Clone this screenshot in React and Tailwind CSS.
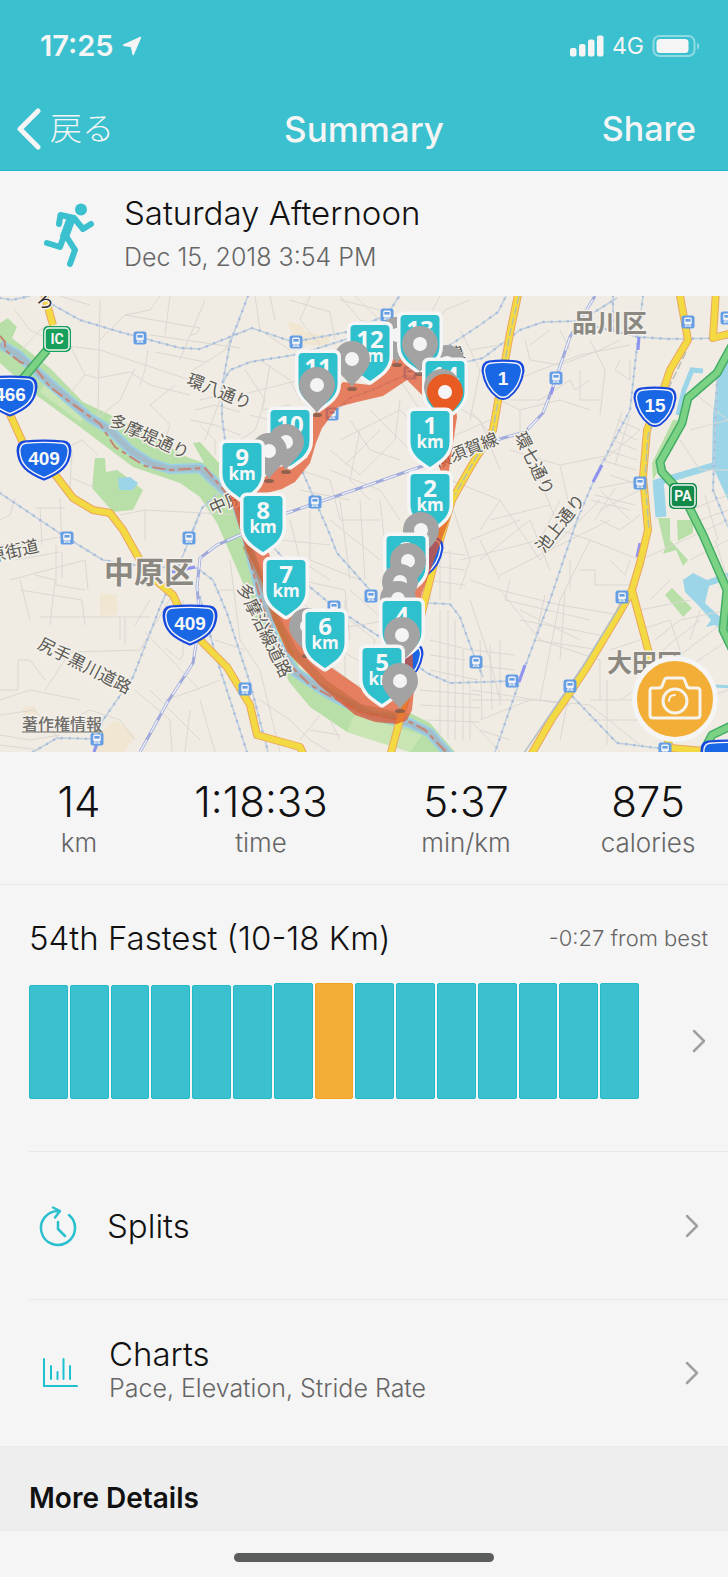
import React from "react";

const KM_MARKERS_AND_PINS = [
  { type: "pin", x: 397, y: 335 },
  { type: "km", x: 370, y: 325, n: "12" },
  { type: "pin", x: 352, y: 359 },
  { type: "km", x: 318, y: 353, n: "11" },
  { type: "pin", x: 317, y: 385 },
  { type: "km", x: 290, y: 410, n: "10" },
  { type: "pin", x: 286, y: 442 },
  { type: "pin", x: 269, y: 451 },
  { type: "km", x: 242, y: 443, n: "9" },
  { type: "km", x: 263, y: 496, n: "8" },
  { type: "km", x: 286, y: 560, n: "7" },
  { type: "pin", x: 307, y: 626 },
  { type: "km", x: 325, y: 612, n: "6" },
  { type: "pin", x: 447, y: 363 },
  { type: "km", x: 420, y: 315, n: "13" },
  { type: "pin", x: 420, y: 344 },
  { type: "km", x: 445, y: 361, n: "14" },
  { type: "pin", x: 442, y: 387 },
  { type: "pin", x: 445, y: 392, color: "#e85b22" },
  { type: "km", x: 430, y: 411, n: "1" },
  { type: "km", x: 430, y: 474, n: "2" },
  { type: "pin", x: 421, y: 530 },
  { type: "km", x: 406, y: 536, n: "3" },
  { type: "pin", x: 408, y: 561 },
  { type: "pin", x: 400, y: 582 },
  { type: "pin", x: 398, y: 599 },
  { type: "km", x: 402, y: 601, n: "4" },
  { type: "pin", x: 402, y: 635 },
  { type: "km", x: 382, y: 648, n: "5" },
  { type: "pin", x: 400, y: 681 },
];

const STATIONS = [
  [140, 338], [296, 342], [387, 315], [410, 373], [332, 414], [315, 502],
  [67, 538], [189, 538], [245, 689], [97, 739], [371, 596], [334, 607],
  [476, 662], [688, 322], [556, 378], [640, 483], [727, 318], [622, 597],
  [512, 681], [570, 686], [665, 749],
];

const RAILS = [
  "M0 298L12 300L30 296M53 305L80 320L120 332L180 348L200 349L252 328L293 342L347 332L387 315L400 295",
  "M248 296L230 343L222 387L222 417L225 440",
  "M223 382L230 370L250 362L300 354L350 338L387 328",
  "M332 414L350 398L372 390L410 373L470 361L483 358L520 330L543 322L580 321L617 298",
  "M450 345L480 325L498 312L506 296",
  "M0 493L55 530M40 520L67 538L103 560L147 567L197 568L213 580L227 613L250 683L268 752",
  "M197 520L180 563L160 607L133 677L103 720L97 739L94 752",
  "M33 752L57 738L97 739",
  "M200 597L217 660L247 752",
  "M597 327L638 337L670 339L728 338M643 296L638 337L630 410L597 473L577 520L550 600L520 680L495 752",
  "M613 296L613 330",
  "M303 473L328 530L337 553L370 590M273 547L310 587L334 607L380 637L427 673L450 683L483 682L512 681",
  "M427 603L450 604L460 617L473 653L483 677",
  "M573 697L617 743L665 749",
  "M717 377L713 490L728 527",
  "M193 530L202 508L220 492",
];

const JR_LINES = [
  "M240 535L217 545L200 558L197 587L200 620L193 663L167 703L140 752",
  "M240 535L287 513L360 488L417 468L503 438L525 432L543 413L553 387L570 337L595 296",
];

const YELLOW_ROADS = [
  "M43 290L53 325",
  "M8 410L23 443L57 477L73 498L93 510L110 513L123 530L147 573L173 595L180 610L203 643L227 667L250 705L257 735L300 747L306 760",
  "M519 290L510 333L493 430L470 468L452 500L440 540L420 620L408 690L398 727L389 760",
  "M679 290L688 340L670 370L660 400L647 430L643 477L648 530L640 563L632 590L617 617L587 667L567 697L553 717L528 760",
  "M632 590L650 657L665 730L670 748L728 753",
  "M716 290L713 338L732 333",
];

const GREEN_ROADS = [
  "M735 340L717 373L688 398L682 423L660 462L662 472L683 495L703 535L727 590L723 630L735 655",
  "M47 350L20 382",
  "M735 724L712 735L704 750",
];

const MINOR_STREETS = [
  "M15 310L30 330L60 345L100 350L190 380M100 300L98 420M100 340L125 315L150 310L160 296M60 296L90 305M20 352L40 330L48 325M70 345L85 375L98 378L130 372",
  "M125 315L200 328L196 334L190 335M148 350L145 370L140 385M155 352L205 362M150 335L240 348M170 296L165 335M205 300L180 360",
  "M98 418L120 400L135 368M60 405L85 375M130 372L150 385L190 395M150 405L170 425L165 440M150 405L175 385",
  "M200 400L222 395L240 400M195 410L215 405L240 412M205 440L220 400L235 390M190 420L215 425L240 435M200 425L215 440L215 455M240 320L225 350L190 372",
  "M40 462L82 440L98 455M72 452L70 490M72 478L95 488M40 508L42 545M60 498L62 545M35 508L65 508M120 515L145 510L240 515M145 510L145 540M0 520L10 515L15 498",
  "M0 545L20 545L60 537M15 560L60 552M10 580L85 560L88 590M20 590L82 600L85 625M20 580L30 620M35 575L55 580L50 625M56 545L56 585L85 590M62 552L62 578",
  "M40 617L150 617M120 617L120 640M125 618L125 645M135 625L150 600M70 652L140 650L175 590M70 652L45 690M145 632L200 690M165 648L180 660L183 655L183 600",
  "M0 690L18 690L18 660L30 660L45 680M0 700L30 690L80 700M0 715L35 710L60 740M60 725L90 710L120 720L135 740M135 690L170 720L172 752M150 690L200 740M200 700L215 752",
  "M0 735L30 740L60 735M0 745L40 750M165 700L195 690L220 680M190 710L185 752M215 590L240 590M230 560L240 640L260 670L280 752M215 640L245 650",
  "M255 296L260 330L290 350M270 296L275 320M290 300L330 312L335 340M310 296L300 320L320 345M340 296L360 320L400 330M355 296L390 330L390 340M340 300L380 310M440 296L430 315M430 340L445 310L470 300",
  "M260 360L290 380L300 400M245 370L265 400L255 430L240 440M270 365L262 410L290 405M240 395L280 385L300 380M250 415L270 420M340 350L350 390",
  "M340 440L360 430L400 410L430 440M350 420L370 450L400 460M330 450L360 475L395 440L400 400M360 430L350 480L370 500M370 410L410 450M330 470L380 490L400 520M380 430L345 465M400 380L420 410",
  "M300 470L330 480L340 520L380 520M300 490L350 500M310 510L310 560L360 580M330 520L380 560M340 500L350 580M290 520L300 560L330 580M360 500L365 580M280 540L330 545",
  "M300 580L345 590L350 640M300 600L330 630L390 620M345 600L345 680M350 590L395 630M350 620L375 640L360 690M340 650L375 670M330 665L355 685L385 690",
  "M445 400L480 420L500 470M460 330L480 370L470 420M470 410L495 440L470 470M470 350L500 345M445 440L490 420M450 480L500 500L480 530M470 540L520 520M460 560L540 540L560 500M450 500L470 560L460 590",
  "M525 340L530 360L560 365L600 350L620 340M515 380L540 370L580 355L630 345M510 400L540 400L570 380L575 390L590 380M580 370L580 400L600 400M570 350L560 330M590 340L605 370L600 415M620 360L615 370L630 380L630 360M530 345L550 330",
  "M500 400L520 410L520 450M510 450L560 465L610 455L640 430M520 410L560 400L590 410M560 465L570 510M540 480L560 530M500 500L540 560L600 500M490 520L550 505M480 560L530 520L550 570",
  "M618 420L640 430M615 430L637 440M612 440L637 450M606 450L637 460M600 460L636 470M630 415L615 465M622 412L605 462M610 475L640 485M598 488L640 480M595 495L635 505M590 500L630 510M600 490L630 520M600 510L640 490M595 520L615 488",
  "M470 580L500 590L560 605L620 615M500 590L540 640L600 660M470 600L490 660L500 700M480 540L500 580M545 595L535 640L600 650M565 590L560 660M510 580L505 600L590 620M520 610L580 640M520 620L600 635M590 540L560 600L540 700",
  "M500 575L610 520M590 540L640 560L728 520M600 520L620 530L640 515M610 560L625 575L630 560M580 570L595 570L595 585L630 585M560 530L590 540M570 560L570 590",
  "M480 640L482 720M490 645L492 710M500 640L500 705M472 650L515 655M472 665L515 670M472 690L570 705M472 700L540 700L590 705L640 745M480 720L530 700M480 730L510 740M570 690L560 740M600 660L600 700M607 680L607 745M590 700L640 700M590 720L640 720",
  "M650 600L670 580M640 610L690 600M655 640L680 620L728 610M650 660L700 620M660 670L720 625M670 680L728 640M640 630L670 620L690 680M700 610L690 640M610 650L640 640M620 700L635 690M700 700L728 690M690 560L728 540M715 540L728 580",
  "M440 610L440 740M448 610L448 740M455 620L455 740M463 650L463 740M470 680L470 740M430 640L470 650M430 655L465 660M430 670L478 680M420 690L480 695M420 705L480 708M425 720L480 722M470 720L500 752",
  "M430 540L430 600M440 545L440 600M450 550L450 600M425 550L465 555M425 565L465 570M425 580L465 585M395 540L400 600M385 545L385 590M380 500L385 545",
  "M290 720L310 740L330 752M320 715L300 740M310 730L340 735M340 740L330 720M260 700L290 720M690 430L728 420M680 440L700 470L728 470M690 390L728 420M690 510L728 495M700 520L728 510M705 495L718 540",
];

const STREET_LABELS = [
  { t: "環八通り", x: 217, y: 397, a: 22 },
  { t: "多摩堤通り", x: 147, y: 442, a: 24 },
  { t: "中原", x: 228, y: 508, a: -24 },
  { t: "原街道", x: 15, y: 557, a: -13 },
  { t: "尻手黒川道路", x: 82, y: 671, a: 27 },
  { t: "多摩沿線道路", x: 259, y: 633, a: 64 },
  { t: "横須賀線", x: 468, y: 456, a: -22 },
  { t: "環七通り", x: 529, y: 466, a: 64 },
  { t: "池上通り", x: 565, y: 527, a: -52 },
  { t: "線", x: 458, y: 360, a: -20 },
];

function KmMarker({ x, y, n }) {
  const d = "M-19.500 4q0-4 4-4h31q4 0 4 4v27c0 12-9 18-19.500 25c-10.500-7-19.500-13-19.500-25z";
  return (
    <g transform={`translate(${x} ${y})`}>
      <path d={d} fill="#f5f5f5" stroke="#f5f5f5" strokeWidth="7" strokeLinejoin="round" />
      <path d={d} fill="#2fc0ce" />
      <g fill="#f7f7f7" textAnchor="middle" className="font-['Open_Sans',sans-serif] font-bold">
        <text y="23" fontSize="24">{n}</text>
        <text y="37" fontSize="17">km</text>
      </g>
    </g>
  );
}

function Pin({ x, y, color = "#a3a3a3" }) {
  return (
    <g transform={`translate(${x} ${y})`}>
      <ellipse cy="30" rx="5" ry="2" fill="#7c5a4c" opacity="0.8" />
      <path d="M0 28C-5 20-18 12-18 0A18 18 0 0 1 18 0C18 12 5 20 0 28Z" fill={color} />
      <circle r="7" fill="#f4f4f4" />
    </g>
  );
}

function RouteShield({ x, y, n, wide }) {
  const d = wide
    ? "M-20-18Q0-20 20-18Q26-17 26-9C25 5 17 12 0 19C-17 12-25 5-26-9Q-26-17-20-18Z"
    : "M-14-18Q0-20 14-18Q20-17 20-9C18 4 12 12 5 17Q0 20-5 17C-12 12-18 4-20-9Q-20-17-14-18Z";
  return (
    <g transform={`translate(${x} ${y})`}>
      <path d={d} fill="#1a67e6" stroke="#1749de" strokeWidth="3" />
      <path d={d} fill="#1a67e6" stroke="#f5f5f5" strokeWidth="1.500" transform="scale(.93)" />
      <text y="5" fontSize="19" textAnchor="middle" fill="#f8f8f8" className="font-['Liberation_Sans',sans-serif] font-bold">{n}</text>
    </g>
  );
}

function Station({ x, y }) {
  return (
    <g transform={`translate(${x} ${y})`}>
      <rect x="-6.500" y="-6.500" width="13" height="13" rx="2.500" fill="#659ee4" />
      <rect x="-3.800" y="-4.500" width="7.600" height="7" rx="1.500" fill="#f4f4f4" />
      <rect x="-2.600" y="-3" width="5.200" height="2.600" fill="#659ee4" />
      <path d="M-3 5L-1.500 2.500M3 5L1.500 2.500M-2.500 4H2.500" stroke="#f4f4f4" strokeWidth="1" />
    </g>
  );
}

function GreenSign({ x, y, label, fill }) {
  return (
    <g transform={`translate(${x} ${y})`}>
      <rect x="-14" y="-13" width="28" height="26" rx="5" fill={fill} />
      <rect x="-12" y="-11" width="24" height="22" rx="4" fill="none" stroke="#f4f4f4" strokeWidth="1.500" />
      <text y="5" fontSize="14" textAnchor="middle" fill="#f6f6f6" className="font-['Roboto',sans-serif] font-bold">{label}</text>
    </g>
  );
}

function RouteMap() {
  return (
    <svg viewBox="0 296 728 456" preserveAspectRatio="xMidYMid slice" className="block h-[456px] w-full" role="img" aria-label="Route map">
      <rect x="-500" y="296" width="1800" height="456" fill="#f0ece4" />

      <g fill="#f1e6d1">
        <path d="M100 593L117 595L117 615L100 616ZM288 322L300 324L306 332L330 336L328 346L295 344ZM22 708L35 706L42 730L28 728ZM100 733L115 720L135 735L125 752L95 752Z" />
      </g>

      <g fill="#b9dfa9">
        <path d="M0 323L8 318L17 327L12 338L50 368L83 402L117 418L187 457L204 463L193 443L200 442L218 462L250 468L250 530L262 580L300 668L360 712L410 713L430 723L455 752L410 752L347 732L310 707L290 683L260 630L243 583L230 553L217 523L200 497L180 483L133 467L80 427L33 393L0 363Z" />
        <path d="M95 458L105 458L106 472L117 470L128 478L143 490L133 510L113 512L92 488Z" />
        <path d="M673 420L683 420L670 450L653 480L652 463ZM658 518L670 518L670 540L688 560L683 566L676 550L663 554L665 548ZM677 520L693 520L693 533L678 541ZM672 588L692 608L683 617L665 595ZM725 423L732 423L732 452L723 450Z" />
      </g>
      <path d="M40 392L80 422L88 416L50 376ZM347 732L354 715L422 735L410 752Z" fill="#c9e5b4" />

      <g fill="#9cd4e8">
        <path d="M118 478L130 477L138 483L133 490L119 490Z" />
        <path d="M732 340L718 372L713 415L712 465L728 500L732 500ZM683 580L693 573L707 580L732 571L732 578L709 586L705 603L732 628L732 640L715 625L706 627L711 620L698 605L685 592Z" />
      </g>
      <g fill="none" stroke="#9cd4e8">
        <path d="M703 371L692 370L684 390L678 415" strokeWidth="5" />
        <path d="M655 483L716 465" strokeWidth="7" />
        <path d="M658 480L661 517" strokeWidth="11" />
        <path d="M715 686L735 687" strokeWidth="3" />
      </g>

      <g fill="none" stroke="#dbd8d1" strokeWidth="1">
        {MINOR_STREETS.map((d) => <path key={d} d={d} />)}
      </g>

      <g fill="none" strokeLinejoin="round">
        <path d="M0 344L17 354L60 392L90 418L110 430L130 450L150 463L170 469L200 468L215 482L235 500L245 530L252 560L262 600L275 640L295 672L330 695L370 715L410 723L430 733L450 756" stroke="#9bcfe2" strokeWidth="10" />
        <path d="M0 344L17 354L60 392L90 418L110 430L130 450L150 463L170 469L200 468L215 482L235 500L245 530L252 560L262 600L275 640L295 672L330 695L370 715L410 723L430 733L450 756" stroke="#a5b6c4" strokeWidth="6" opacity=".8" />
        <path d="M0 336L5 342L5 350L20 362L35 368L50 387L70 402L100 424L115 447L145 466L170 470L205 468L222 488L240 510L250 560L262 605L280 655L310 685L360 712L410 722L425 730L450 756" stroke="#c58577" strokeWidth="2" strokeDasharray="13 4 5 4" />
      </g>

      <g fill="none">
        {RAILS.map((d) => (
          <g key={d}>
            <path d={d} stroke="#bfcede" strokeWidth="1.500" />
            <path d={d} stroke="#a9bfdb" strokeWidth="2.600" strokeLinecap="round" strokeDasharray="0.100 8" />
          </g>
        ))}
        {JR_LINES.map((d) => (
          <g key={d}>
            <path d={d} stroke="#a0aadb" strokeWidth="3" />
            <path d={d} stroke="#eceef8" strokeWidth="1.500" strokeDasharray="14 8" />
          </g>
        ))}
        <path d="M172 572L195 567M639 337L638 350M602 465L593 482M640 543L637 557M525 665L519 682M553 387L551 394M97 744L94 752" stroke="#8d93ef" strokeWidth="3" />
      </g>

      <g fill="none" strokeLinejoin="round">
        {GREEN_ROADS.map((d) => <path key={d} d={d} stroke="#45ad65" strokeWidth="9" />)}
        {GREEN_ROADS.map((d) => <path key={d} d={d} stroke="#7bd284" strokeWidth="6" />)}
        {YELLOW_ROADS.map((d) => <path key={d} d={d} stroke="#eaa660" strokeWidth="8" />)}
        {YELLOW_ROADS.map((d) => <path key={d} d={d} stroke="#f4da42" strokeWidth="6" />)}
        <path d="M519 296L510 333L493 430L470 468L455 495M686 352L670 385L648 435L645 477L649 530" stroke="#b9bfae" strokeWidth="1.500" strokeDasharray="8 3" />
        <path d="M632 596L587 669L528 756" stroke="#b3bfc4" strokeWidth="1.500" transform="translate(-4 -3)" />
      </g>

      {STATIONS.map(([x, y]) => <Station key={`${x}-${y}`} x={x} y={y} />)}

      <g className="font-['Noto_Sans_CJK_JP',sans-serif]" stroke="#f3f0ea" strokeWidth="3" strokeLinejoin="round" style={{ paintOrder: "stroke" }}>
        <g fill="#5b5a54" fontSize="17" textAnchor="middle">
          {STREET_LABELS.map((l) => (
            <text key={l.t} transform={`translate(${l.x} ${l.y}) rotate(${l.a})`}>{l.t}</text>
          ))}
          <text x="45" y="307" fontSize="18" fill="#2a2a2a">ろ</text>
        </g>
        <g fill="#8b8882" className="font-bold">
          <text x="572" y="332" fontSize="25">品川区</text>
          <text x="104" y="583" fontSize="30">中原区</text>
          <text x="607" y="672" fontSize="25">大田区</text>
        </g>
        <text x="22" y="730" fontSize="16" fill="#6f6d68" className="font-medium">著作権情報</text>
      </g>
      <path d="M22 732H103" stroke="#6f6d68" strokeWidth="1" />

      <GreenSign x={57} y={339} label="IC" fill="#16a05c" />
      <GreenSign x={683} y={496} label="PA" fill="#128a4a" />
      <RouteShield x={10} y={396} n="466" wide />
      <RouteShield x={44} y={460} n="409" wide />
      <RouteShield x={190} y={625} n="409" wide />
      <RouteShield x={503} y={380} n="1" />
      <RouteShield x={655} y={407} n="15" />
      <RouteShield x={422} y={557} n="1" />
      <RouteShield x={402} y={663} n="1" />
      <RouteShield x={728} y={760} n="409" wide />

      <path
        fill="#e2552b"
        opacity="0.720"
        d="M257 483L277 468L307 458L313 440L313 415L343 382L370 385L397 355L440 378L455 400L457 417L449 470L452 512L422 593L412 640L414 690L412 710L407 720L397 724L375 722L355 715L320 686L287 652L273 620L262 583L245 547L234 510L229 492L258 485L250 500L268 551L290 612L332 668L362 689L397 700L403 650L415 590L442 512L440 470L446 417L423 396L407 380L383 396L357 402L338 407L322 428L316 443L310 463L295 482L282 489L240 500Z"
      />
      <path d="M246 545L262 580L276 618L294 652L325 684L360 708L396 716" fill="none" stroke="#b9683a" strokeWidth="8" strokeLinejoin="round" opacity="0.450" />

      {KM_MARKERS_AND_PINS.map((m) =>
        m.type === "km"
          ? <KmMarker key={`km${m.n}`} x={m.x} y={m.y} n={m.n} />
          : <Pin key={`pin${m.x}-${m.y}`} x={m.x} y={m.y} color={m.color} />
      )}
    </svg>
  );
}

function Chevron() {
  return (
    <svg viewBox="0 0 14 24" className="h-6 w-3.5 shrink-0" fill="none" stroke="#a0a0a0" strokeWidth="2.500" strokeLinecap="round" strokeLinejoin="round" aria-hidden="true">
      <path d="M2 2L12 12L2 22" />
    </svg>
  );
}

const STATS = [
  { value: "14", label: "km" },
  { value: "1:18:33", label: "time" },
  { value: "5:37", label: "min/km" },
  { value: "875", label: "calories" },
];

const BARS = [114, 114, 114, 114, 114, 114, 116, 116, 116, 116, 116, 116, 116, 116, 116];

export default function App() {
  return (
    <div className="flex min-h-screen flex-col bg-[#f5f5f5] font-['Inter','Noto_Sans_CJK_JP',sans-serif] text-[#111]">
      <header className="border-b border-[#1fb8c8] bg-[#3ac0ce] text-[#f5f5f5]">
        <div className="flex h-[92px] items-center justify-between pr-7 pl-10">
          <div className="flex items-center gap-2">
            <span className="text-[29px] leading-8 font-semibold">17:25</span>
            <svg viewBox="0 0 20 20" className="size-5" fill="currentColor" stroke="currentColor" strokeWidth="1.500" strokeLinejoin="round" aria-hidden="true">
              <path d="M18.500 1.500L1.500 9.300L9.500 10.500L11.200 18.500Z" />
            </svg>
          </div>
          <div className="flex items-center gap-2">
            <svg viewBox="0 0 34 22" className="h-[22px] w-[34px]" fill="currentColor" aria-hidden="true">
              <rect x="0" y="13" width="6.500" height="8.500" rx="2" />
              <rect x="9" y="9" width="6.500" height="12.500" rx="2" />
              <rect x="18" y="4.500" width="6.500" height="17" rx="2" />
              <rect x="27" y="0.500" width="6.500" height="21" rx="2" />
            </svg>
            <span className="text-[23px] leading-8">4G</span>
            <svg viewBox="0 0 48 24" className="h-6 w-12" aria-hidden="true">
              <rect x="1.500" y="2" width="41" height="20" rx="6" fill="none" stroke="#8edbe3" strokeWidth="2" />
              <rect x="4.500" y="5" width="32" height="14" rx="3.500" fill="#f5f5f5" />
              <path d="M45 8.500C48 9.500 48 14.500 45 15.500Z" fill="#8edbe3" />
            </svg>
          </div>
        </div>
        <nav className="grid h-[78px] grid-cols-[1fr_auto_1fr] items-center pb-1">
          <button type="button" className="flex items-center gap-2 justify-self-start pl-4 text-[32px] leading-10 font-light">
            <svg viewBox="0 0 26 42" className="h-[42px] w-[26px]" fill="none" stroke="currentColor" strokeWidth="5" strokeLinecap="round" strokeLinejoin="round" aria-hidden="true">
              <path d="M22 3L4 21L22 39" />
            </svg>
            戻る
          </button>
          <h1 className="text-[35px] leading-10 font-medium">Summary</h1>
          <button type="button" className="justify-self-end pr-8 text-[34px] leading-10 font-medium">Share</button>
        </nav>
      </header>

      <section className="flex h-[125px] items-center gap-7 pt-0.5 pl-11">
        <svg viewBox="0 0 52 66" className="h-[66px] w-[52px]" fill="none" stroke="#3ac0ce" strokeWidth="6" strokeLinecap="round" strokeLinejoin="round" aria-hidden="true">
          <circle cx="37" cy="7.500" r="6" fill="#3ac0ce" stroke="none" />
          <path d="M15 22L16.500 13L30 16L39 27L47 22" />
          <path d="M27 17L20 36" strokeWidth="9" strokeLinecap="butt" />
          <path d="M21 31L16 45L3 41M22 34L31 48L26 62" />
        </svg>
        <div className="min-w-0">
          <h2 className="text-[33px] leading-11 font-light">Saturday Afternoon</h2>
          <p className="text-[25px] leading-11 font-light text-[#666]">Dec 15, 2018 3:54 PM</p>
        </div>
      </section>

      <section className="relative">
        <RouteMap />
        <button type="button" aria-label="Add photo" className="absolute right-2.5 bottom-2.5 flex size-[86px] items-center justify-center rounded-full border-[5px] border-[#f5f5f5] bg-[#f3ae37]">
          <svg viewBox="0 0 54 46" className="h-[46px] w-[54px]" fill="none" stroke="#f5f3ec" strokeWidth="3" strokeLinejoin="round" strokeLinecap="round" aria-hidden="true">
            <path d="M4 12H11Q14 12 14.500 9L16 5Q17 2 19 2H34Q36 2 37 5L38.500 9Q39 12 42 12H49Q52 12 52 15V39Q52 42 49 42H5Q2 42 2 39V15Q2 12 4 12Z" />
            <circle cx="27" cy="25" r="12" />
            <path d="M21 25Q21 19 27 19" strokeWidth="2" />
          </svg>
        </button>
      </section>

      <dl className="grid grid-cols-[158fr_206fr_204fr_160fr] border-b border-[#e9e9e9] pt-[26px] pb-[23px] text-center">
        {STATS.map((s) => (
          <div key={s.label} className="flex flex-col-reverse">
            <dt className="text-[26px] leading-9 font-light text-[#666]">{s.label}</dt>
            <dd className="text-[42px] leading-[47px] font-light">{s.value}</dd>
          </div>
        ))}
      </dl>

      <section className="pt-[33px] pl-[29px]">
        <div className="flex items-center justify-between pr-5">
          <h2 className="text-[33px] leading-10 font-light">54th Fastest (10-18 Km)</h2>
          <p className="text-[22px] leading-10 font-light text-[#666]">-0:27 from best</p>
        </div>
        <a href="#fastest" aria-label="Fastest activities" className="flex items-center justify-between border-b border-[#e9e9e9] pt-6 pr-[22px] pb-13">
          <div className="mr-[53px] flex h-[117px] flex-1 items-end gap-0.5">
            {BARS.map((h, i) => (
              <span
                key={i}
                className={i === 7 ? "flex-1 rounded-xs border border-[#f2a51c] bg-[#f3ae37]" : "flex-1 rounded-xs border border-[#22b9c8] bg-[#3ac0ce]"}
                style={{ height: h }}
              />
            ))}
          </div>
          <Chevron />
        </a>
        <a href="#splits" className="flex h-[148px] items-center border-b border-[#e9e9e9] pr-[29px] pl-2.5">
          <svg viewBox="0 0 40 42" className="h-[42px] w-10" fill="none" stroke="#2cc0ce" strokeWidth="2.500" strokeLinecap="round" strokeLinejoin="round" aria-hidden="true">
            <path d="M20 6A17 17 0 1 0 30 10M14 2.500L21 6L16 12.500M19 17V24L26 31" />
          </svg>
          <span className="ml-7 flex-1 text-[33px] leading-10 font-light">Splits</span>
          <Chevron />
        </a>
        <a href="#charts" className="flex h-[146px] items-center pr-[29px] pl-3.5">
          <svg viewBox="0 0 36 30" className="h-[30px] w-9" fill="none" stroke="#1fc0cf" strokeWidth="2" strokeLinecap="round" aria-hidden="true">
            <path d="M1 1V28H34M8 8V21M14.500 14V21M20.500 1V21M27 8V21" />
          </svg>
          <span className="ml-[30px] flex flex-1 flex-col pb-2.5">
            <span className="text-[33px] leading-10 font-light">Charts</span>
            <span className="text-[25px] leading-7 font-light text-[#666]">Pace, Elevation, Stride Rate</span>
          </span>
          <Chevron />
        </a>
      </section>

      <section className="border-y border-[#e9e9e9] bg-[#eee] pt-[33px] pb-3.5 pl-[29px]">
        <h2 className="text-[28px] leading-9 font-semibold">More Details</h2>
      </section>

      <footer className="flex justify-center pt-[22px] pb-4">
        <div className="h-[9px] w-[260px] rounded-full bg-[#5b5d5c]" />
      </footer>
    </div>
  );
}
